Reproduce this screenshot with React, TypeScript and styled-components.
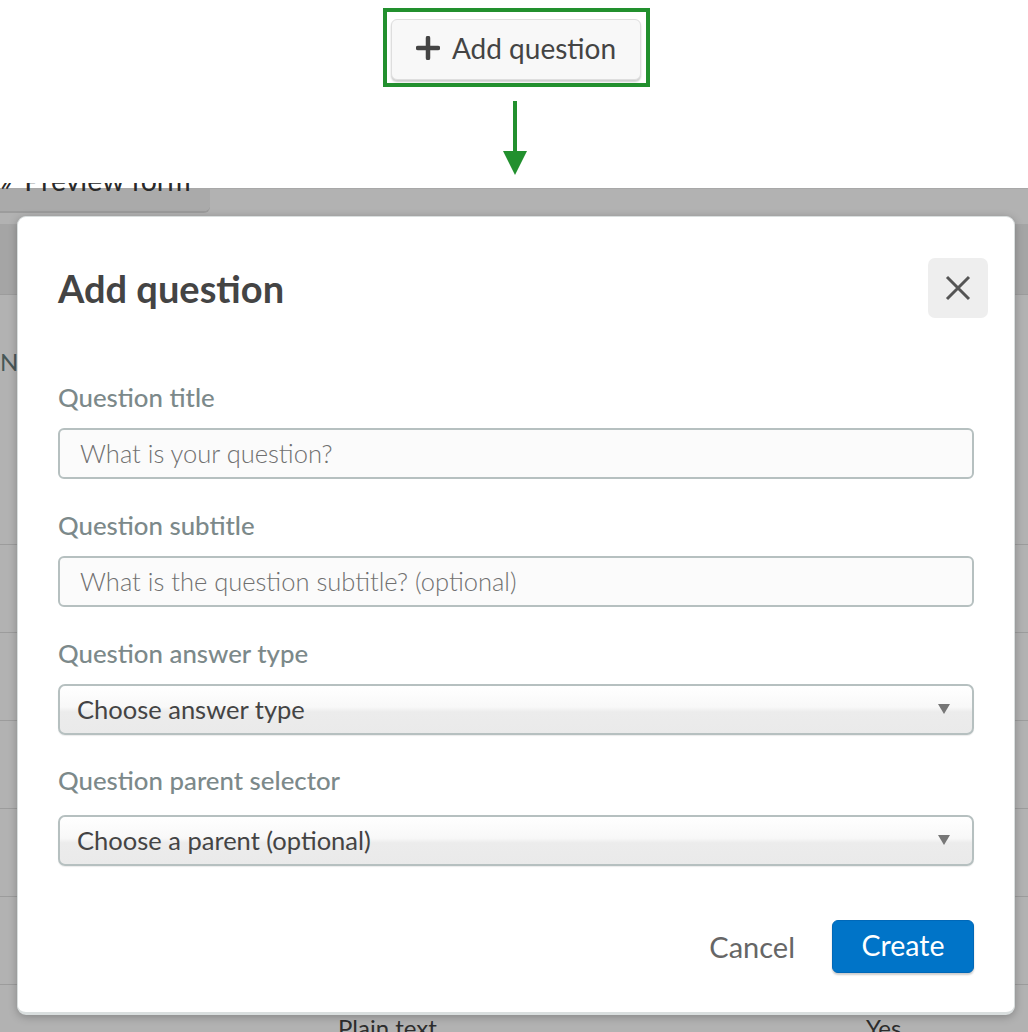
import React from "react";
import styled, { createGlobalStyle } from "styled-components";

const GlobalStyle = createGlobalStyle`
  html, body { margin: 0; padding: 0; background: #ffffff; }
  body { font-family: Lato, "Open Sans", "Liberation Sans", sans-serif; overflow: hidden; }
  * { box-sizing: border-box; }
`;

const Page = styled.div`
  width: 1028px;
  height: 1032px;
  display: flex;
  flex-direction: column;
  overflow: hidden;
`;

const Callout = styled.div`
  height: 188px;
  flex-shrink: 0;
  background: #ffffff;
  display: flex;
  flex-direction: column;
  align-items: center;
  padding-top: 8px;
`;

const Highlight = styled.div`
  width: 267px;
  height: 79px;
  border: 4px solid #22902e;
  padding: 7px 5px 3px 4px;
  margin-left: 5px;
`;

const AddButton = styled.button`
  width: 250px;
  height: 61px;
  border: 1px solid #dedede;
  border-radius: 6px;
  background: #f8f8f8;
  box-shadow: 0 2px 2px rgba(0, 0, 0, 0.2);
  display: flex;
  align-items: center;
  justify-content: center;
  gap: 12px;
  font-family: Lato, "Liberation Sans", sans-serif;
  font-size: 28px;
  color: #444444;
  padding: 0 0 4px 0;
`;

const ArrowWrap = styled.div`
  margin-top: 14px;
  margin-left: 2px;
  height: 74px;
`;

const Backdrop = styled.div`
  position: relative;
  flex: 1;
  background: #b2b2b2;
  border-top: 1px solid #a8a8a8;
  display: flex;
  flex-direction: column;
`;

const TopStrip = styled.div`
  flex-shrink: 0;
  margin-top: -6px;
  height: 41px;
  overflow: hidden;
  display: flex;
  align-items: flex-start;
`;

const PreviewButton = styled.div`
  margin-left: -12px;
  width: 222px;
  height: 28px;
  border-radius: 0 0 6px 0;
  background: linear-gradient(to bottom, transparent 0, transparent 6px, #aaaaaa 6px);
  box-shadow: 0 2px 0 rgba(0, 0, 0, 0.12);
  padding-left: 12px;
  font-size: 28.5px;
  color: #2a2a2a;
  line-height: 20px;
  white-space: nowrap;
  display: flex;
  align-items: flex-start;
  gap: 12px;
`;

const PreviewLabel = styled.span`
  margin-top: -13px;
`;

const Row = styled.div<{ $h: number; $head?: boolean }>`
  height: ${(p) => p.$h}px;
  flex-shrink: 0;
  background: ${(p) => (p.$head ? "#a5a5a5" : "transparent")};
  border-bottom: 1px solid #9c9c9c;
  display: flex;
  align-items: flex-start;
  font-size: 24px;
  color: #2d2d2d;
`;

const Cell = styled.div<{ $w: number; $top: number; $teal?: boolean }>`
  width: ${(p) => p.$w}px;
  padding-top: ${(p) => p.$top}px;
  color: ${(p) => (p.$teal ? "#485757" : "#2d2d2d")};
  white-space: nowrap;
  flex-shrink: 0;
`;

const Modal = styled.div`
  position: absolute;
  top: 27px;
  left: 17px;
  width: 998px;
  height: 799px;
  background: #ffffff;
  border-radius: 9px;
  border: 1px solid #d9dede;
  border-bottom: 3px solid #d9dede;
  box-shadow: 0 2px 8px rgba(0, 0, 0, 0.25);
  padding: 41px 40px 0 40px;
  display: flex;
  flex-direction: column;
`;

const Header = styled.div`
  display: flex;
  align-items: center;
  justify-content: space-between;
  margin-right: -14px;
  height: 60px;
`;

const Title = styled.h2`
  margin: 0;
  font-size: 38px;
  font-weight: 700;
  color: #444444;
`;

const CloseButton = styled.button`
  width: 60px;
  height: 60px;
  border: none;
  border-radius: 7px;
  background: #eeeeee;
  display: flex;
  align-items: center;
  justify-content: center;
  padding: 0;
`;

const Field = styled.div<{ $mt: number; $gap: number }>`
  margin-top: ${(p) => p.$mt}px;
  display: flex;
  flex-direction: column;
  gap: ${(p) => p.$gap}px;
`;

const Label = styled.label`
  font-size: 25.8px;
  font-weight: 500;
  line-height: 28px;
  color: #7c898a;
`;

const TextInput = styled.div`
  height: 51px;
  border: 2px solid #b6c0c0;
  border-radius: 6px;
  background: #fbfbfb;
  display: flex;
  align-items: center;
  padding: 0 0 2px 20px;
  font-size: 25.5px;
  font-weight: 300;
  color: #707070;
`;

const SelectBox = styled.div`
  height: 51px;
  border: 2px solid #b6c0c0;
  border-radius: 7px;
  background: linear-gradient(to bottom, #ffffff 0%, #f8f8f8 45%, #ececec 55%, #eaeaea 100%);
  box-shadow: 0 1px 1px rgba(0, 0, 0, 0.08);
  display: flex;
  align-items: center;
  justify-content: space-between;
  padding: 0 22px 2px 17px;
  font-size: 25.5px;
  color: #444444;
`;

const Footer = styled.div`
  margin-top: 54px;
  display: flex;
  justify-content: flex-end;
  align-items: center;
  gap: 37px;
`;

const CancelButton = styled.button`
  border: none;
  background: transparent;
  font-family: Lato, "Liberation Sans", sans-serif;
  font-size: 29px;
  color: #666666;
  padding: 0;
`;

const CreateButton = styled.button`
  width: 142px;
  height: 53px;
  border: 1px solid #0068b8;
  border-radius: 6px;
  background: #0074c8;
  box-shadow: 0 2px 2px rgba(0, 0, 0, 0.2);
  font-family: Lato, "Liberation Sans", sans-serif;
  font-size: 28.5px;
  color: #ffffff;
  padding: 0 0 3px 0;
`;

const fields = [
  { label: "Question title", kind: "input", text: "What is your question?", mt: 65, gap: 17 },
  { label: "Question subtitle", kind: "input", text: "What is the question subtitle? (optional)", mt: 32, gap: 17 },
  { label: "Question answer type", kind: "select", text: "Choose answer type", mt: 32, gap: 17 },
  { label: "Question parent selector", kind: "select", text: "Choose a parent (optional)", mt: 31, gap: 21 },
];

const Caret = () => (
  <svg width="12" height="10" viewBox="0 0 12 10">
    <path d="M0 0 H12 L6 10 Z" fill="#777777" />
  </svg>
);

export default function App() {
  return (
    <Page>
      <GlobalStyle />
      <Callout>
        <Highlight>
          <AddButton>
            <svg width="24" height="24" viewBox="0 0 24 24">
              <path d="M12 2 V22 M2 12 H22" stroke="#444444" strokeWidth="4.5" strokeLinecap="round" />
            </svg>
            Add question
          </AddButton>
        </Highlight>
        <ArrowWrap>
          <svg width="26" height="74" viewBox="0 0 26 74">
            <rect x="11" y="0" width="4" height="52" fill="#22902e" />
            <path d="M1 50 H25 L13 74 Z" fill="#22902e" />
          </svg>
        </ArrowWrap>
      </Callout>
      <Backdrop>
        <TopStrip>
          <PreviewButton>
            <PreviewLabel>»</PreviewLabel>
            <PreviewLabel>Preview form</PreviewLabel>
          </PreviewButton>
        </TopStrip>
        <Row $h={71} $head />
        <Row $h={250}>
          <Cell $w={400} $top={52} $teal>Name</Cell>
        </Row>
        <Row $h={88} />
        <Row $h={88} />
        <Row $h={88} />
        <Row $h={88} />
        <Row $h={88} />
        <Row $h={120}>
          <Cell $w={338} $top={0} />
          <Cell $w={528} $top={28}>Plain text</Cell>
          <Cell $w={100} $top={28}>Yes</Cell>
        </Row>
        <Modal>
          <Header>
            <Title>Add question</Title>
            <CloseButton aria-label="Close">
              <svg width="26" height="26" viewBox="0 0 26 26">
                <path d="M2 2 L24 24 M24 2 L2 24" stroke="#555555" strokeWidth="3" />
              </svg>
            </CloseButton>
          </Header>
          {fields.map((f) => (
            <Field key={f.label} $mt={f.mt} $gap={f.gap}>
              <Label>{f.label}</Label>
              {f.kind === "input" ? (
                <TextInput>{f.text}</TextInput>
              ) : (
                <SelectBox>
                  <span>{f.text}</span>
                  <Caret />
                </SelectBox>
              )}
            </Field>
          ))}
          <Footer>
            <CancelButton>Cancel</CancelButton>
            <CreateButton>Create</CreateButton>
          </Footer>
        </Modal>
      </Backdrop>
    </Page>
  );
}
